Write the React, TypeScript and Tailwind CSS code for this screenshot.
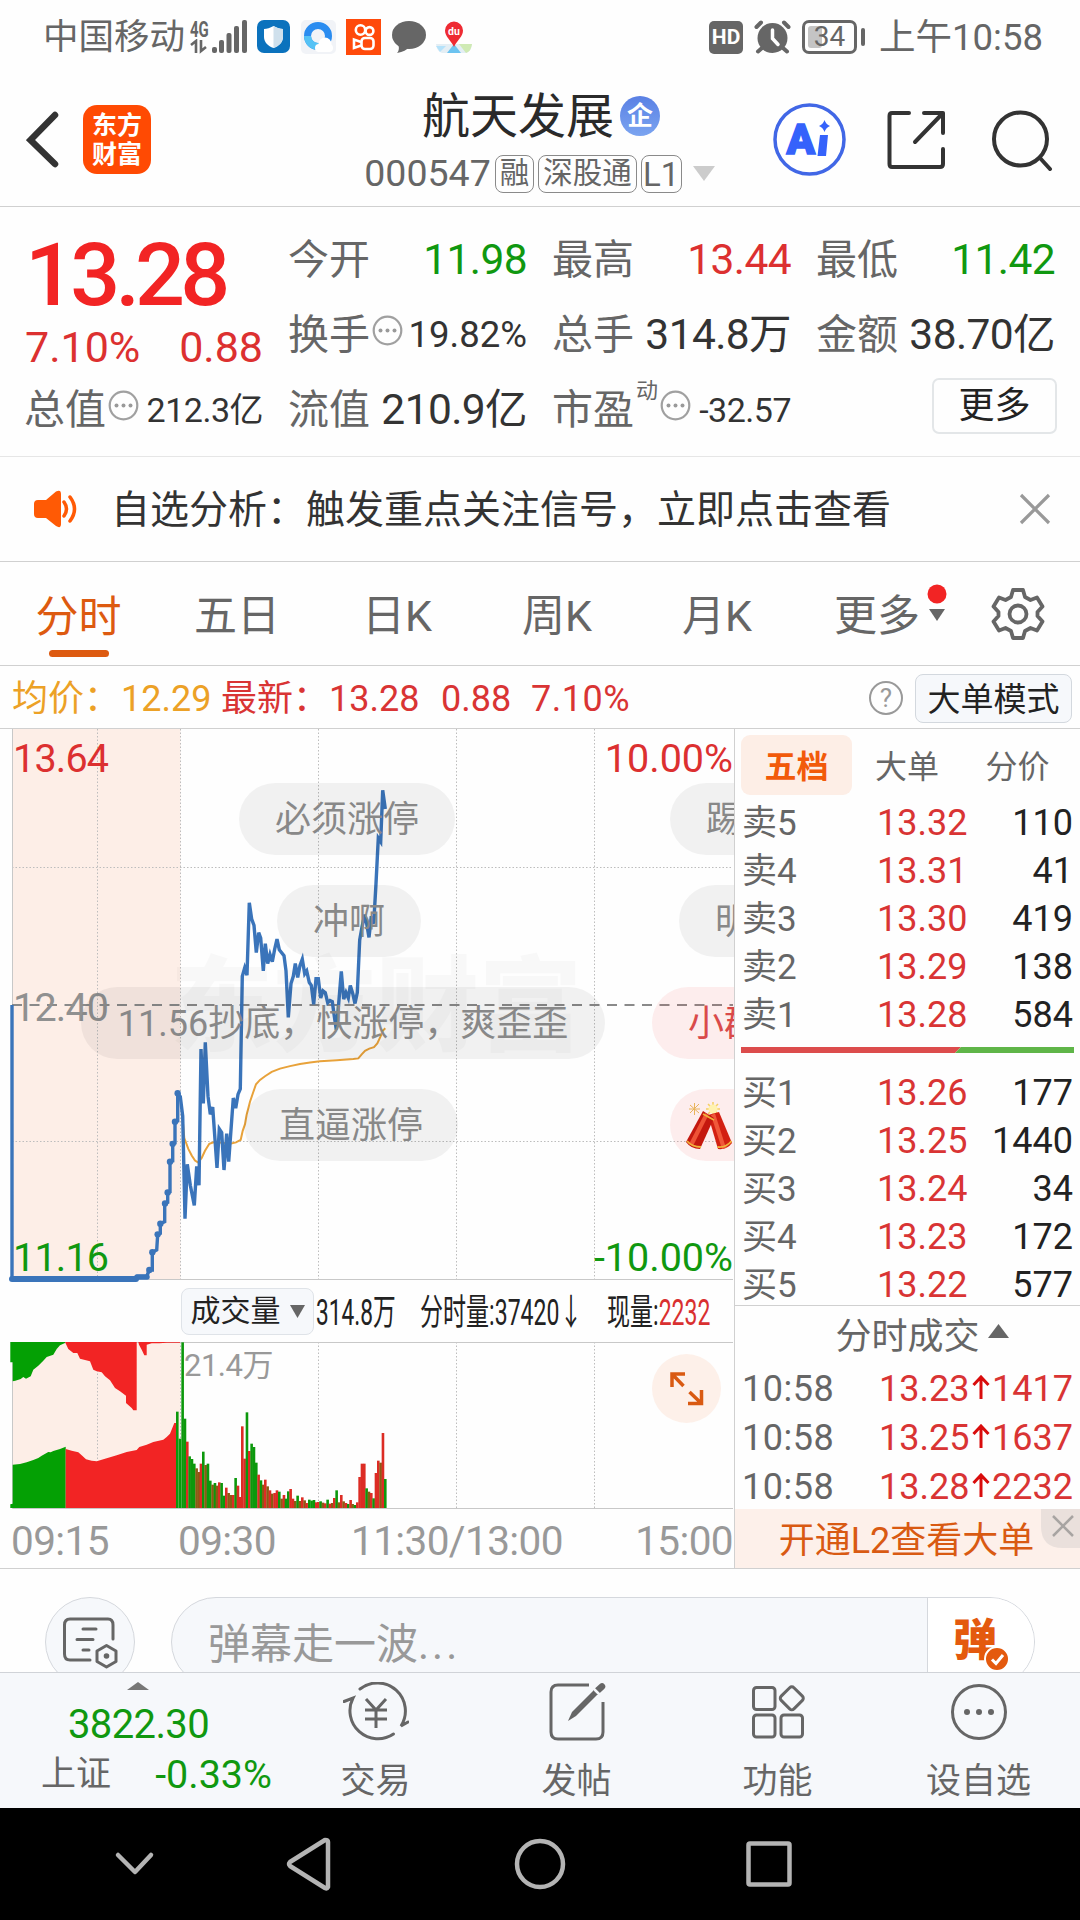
import React from "react";

type Point = [number, number];

const toPricePoint = ([x, y]: Point) => `${(x / 3).toFixed(1)},${(y / 2.751 - 9).toFixed(1)}`;
const toVolumePoint = ([x, y]: Point) => `${(x / 3).toFixed(1)},${((y - 187) / 3).toFixed(1)}`;

const auctionLine: Point[] = [
  [36, 784], [36, 1537], [410, 1537], [412, 1531], [440, 1531], [448, 1513], [457, 1513], [457, 1464],
  [470, 1458], [473, 1415], [481, 1412], [481, 1386], [494, 1380], [494, 1330], [503, 1327], [503, 1300],
  [510, 1298], [510, 1215], [518, 1213], [518, 1166], [525, 1164], [525, 1105], [533, 1103], [533, 1027],
];

const auctionDots: Point[] = [
  [448, 1513], [457, 1464], [473, 1415], [481, 1386], [495, 1330], [503, 1300], [510, 1215], [518, 1166],
  [525, 1105], [533, 1027],
];

const priceLine: Point[] = [
  [533, 1027], [541, 1036], [548, 1090], [555, 1372], [562, 1222], [571, 1280], [583, 1335], [590, 1228],
  [597, 1280], [603, 905], [610, 1055], [616, 887], [624, 1035], [631, 1085], [638, 1065], [651, 1232],
  [658, 1125], [665, 1135], [672, 1238], [680, 1138], [686, 1215], [700, 1040], [707, 1068], [714, 1030],
  [721, 1015], [727, 705], [734, 682], [741, 702], [748, 503], [755, 548], [762, 565], [769, 640],
  [776, 585], [782, 600], [790, 690], [796, 615], [803, 670], [810, 645], [817, 665], [824, 630],
  [831, 603], [838, 632], [852, 648], [858, 690], [865, 818], [873, 725], [880, 705], [886, 670],
  [893, 708], [900, 675], [907, 658], [914, 698], [920, 690], [928, 722], [934, 730], [941, 782],
  [948, 712], [955, 712], [962, 765], [969, 745], [976, 750], [983, 778], [990, 772], [997, 775],
  [1003, 815], [1009, 852], [1016, 780], [1024, 692], [1031, 768], [1038, 750], [1045, 765], [1051, 730],
  [1058, 752], [1065, 780], [1072, 750], [1079, 605], [1086, 570], [1094, 535], [1100, 560], [1107, 598],
  [1114, 540], [1121, 560], [1128, 450], [1135, 325], [1142, 335], [1148, 193], [1156, 245],
];

const averageLine: Point[] = [
  [548, 1100], [553, 1150], [565, 1180], [575, 1198], [585, 1212], [594, 1217], [605, 1205], [615, 1185],
  [628, 1166], [645, 1160], [665, 1163], [690, 1166], [708, 1162], [722, 1155], [728, 1130], [735, 1112],
  [740, 1085], [750, 1050], [758, 1028], [768, 1002], [780, 990], [795, 980], [815, 968], [840, 959],
  [870, 952], [900, 946], [930, 942], [960, 939], [1010, 936], [1060, 933], [1075, 931], [1085, 920],
  [1095, 910], [1108, 904], [1122, 900], [1132, 890], [1142, 870], [1148, 855], [1156, 848],
];

const volumeAreas: { color: string; points: Point[] }[] = [
  {
    color: "#04a004",
    points: [
      [31, 187], [31, 248], [38, 248], [38, 305], [46, 303], [62, 298], [70, 292], [78, 297], [92, 290],
      [100, 270], [115, 258], [130, 243], [140, 232], [160, 225], [170, 208], [180, 197], [195, 190], [195, 187],
    ],
  },
  {
    color: "#f22424",
    points: [
      [195, 187], [205, 208], [220, 220], [232, 220], [240, 237], [270, 245], [280, 270], [290, 275], [305, 278],
      [315, 290], [330, 302], [345, 325], [360, 335], [378, 348], [378, 370], [395, 385], [400, 392], [410, 392],
      [410, 187],
    ],
  },
  {
    color: "#f22424",
    points: [
      [415, 187], [417, 195], [425, 210], [433, 227], [440, 227], [440, 195], [455, 191], [478, 191], [500, 189],
      [540, 189], [540, 187],
    ],
  },
  {
    color: "#04a004",
    points: [
      [31, 685], [31, 674], [38, 672], [38, 555], [60, 553], [80, 548], [100, 541], [115, 535], [125, 528],
      [145, 517], [152, 518], [160, 514], [180, 508], [197, 501], [197, 685],
    ],
  },
  {
    color: "#f22424",
    points: [
      [197, 685], [197, 508], [215, 513], [235, 518], [245, 527], [258, 539], [275, 543], [290, 545], [320, 536],
      [350, 527], [380, 517], [410, 511], [418, 502], [440, 495], [460, 487], [490, 480], [500, 472], [510, 462],
      [517, 445], [523, 430], [528, 430], [528, 685],
    ],
  },
];

const barColors: Record<string, string> = { g: "#0c980c", r: "#dc2c24", m: "#8c5a14" };

const volumeBars: [number, string, number][] = [
  [532, "g", 396], [540, "g", 477], [548, "g", 188], [555, "g", 417], [562, "r", 486], [569, "g", 530],
  [576, "g", 538], [583, "g", 552], [590, "m", 566], [597, "m", 577], [603, "r", 552], [610, "g", 516],
  [617, "m", 556], [624, "g", 552], [631, "g", 603], [638, "m", 615], [645, "g", 610], [651, "m", 618],
  [658, "r", 608], [665, "g", 610], [672, "g", 648], [679, "r", 624], [686, "m", 640], [693, "m", 646],
  [700, "r", 646], [707, "g", 595], [714, "r", 618], [720, "r", 652], [727, "r", 440], [734, "r", 537],
  [741, "g", 398], [748, "r", 514], [755, "g", 492], [762, "g", 502], [769, "g", 549], [776, "r", 585],
  [783, "g", 602], [790, "m", 615], [796, "r", 600], [803, "m", 620], [810, "r", 632], [817, "m", 642],
  [824, "r", 640], [831, "r", 632], [838, "g", 636], [845, "m", 657], [852, "r", 646], [858, "g", 657],
  [865, "g", 635], [872, "r", 628], [879, "r", 657], [886, "m", 664], [893, "g", 648], [900, "m", 664],
  [907, "r", 653], [914, "m", 662], [920, "r", 670], [928, "g", 660], [935, "g", 663], [942, "g", 661],
  [949, "r", 668], [955, "r", 667], [962, "g", 665], [969, "m", 669], [976, "r", 671], [983, "g", 660],
  [990, "r", 672], [997, "m", 670], [1003, "r", 655], [1010, "g", 632], [1017, "m", 668], [1024, "r", 646],
  [1031, "m", 665], [1038, "r", 670], [1045, "g", 673], [1052, "r", 661], [1058, "m", 673], [1065, "g", 676],
  [1072, "r", 668], [1079, "r", 592], [1086, "r", 552], [1093, "r", 552], [1100, "g", 626], [1107, "m", 636],
  [1114, "r", 640], [1121, "g", 656], [1128, "r", 580], [1135, "r", 543], [1142, "m", 549], [1149, "r", 460],
  [1156, "g", 598],
];

const sells = [
  ["卖5", "13.32", "110"],
  ["卖4", "13.31", "41"],
  ["卖3", "13.30", "419"],
  ["卖2", "13.29", "138"],
  ["卖1", "13.28", "584"],
];

const buys = [
  ["买1", "13.26", "177"],
  ["买2", "13.25", "1440"],
  ["买3", "13.24", "34"],
  ["买4", "13.23", "172"],
  ["买5", "13.22", "577"],
];

const trades = [
  ["10:58", "13.23", "1417"],
  ["10:58", "13.25", "1637"],
  ["10:58", "13.28", "2232"],
];

const StatusBar: React.FC = () => (
  <div className="flex h-[74px] items-center justify-between pl-[43px] pr-[37px] text-[#666]">
    <div className="flex items-center">
      <span className="w-[147px] whitespace-nowrap pt-[2px] text-[35.5px] leading-none">中国移动</span>
      <div className="flex w-[60px] items-end">
        <div className="flex w-[22px] flex-col items-start">
          <span className="origin-left scale-x-[0.68] text-[22px] font-bold leading-[18px]">4G</span>
          <svg width="18" height="15" viewBox="0 0 18 15" fill="none" stroke="#666" strokeWidth="2.6">
            <path d="M1 6 L6 2 V14 M11 1 V12 L16 8" />
          </svg>
        </div>
        <svg width="36" height="34" viewBox="0 0 36 34" fill="#666">
          <rect x="0" y="27" width="5" height="6" rx="2" />
          <rect x="7" y="20" width="5" height="13" rx="2" />
          <rect x="14.5" y="13" width="5" height="20" rx="2" />
          <rect x="22" y="6" width="5" height="27" rx="2" />
          <rect x="30" y="0" width="5" height="33" rx="2" />
        </svg>
      </div>
      <div className="ml-[7px] flex items-center gap-[10px]">
        <svg width="34" height="34" viewBox="0 0 34 34">
          <rect width="33" height="33" rx="7" fill="#0b72bd" />
          <path d="M16.5 6 C20 8 23 9 26 9 V17 C26 22 22 26 16.5 28 C11 26 7 22 7 17 V9 C10 9 13 8 16.5 6Z" fill="#fff" />
          <path d="M16.5 6 C20 8 23 9 26 9 V17 C26 22 22 26 16.5 28Z" fill="#cfe0ec" />
        </svg>
        <svg width="35" height="34" viewBox="0 0 35 34">
          <rect width="35" height="34" rx="5" fill="#f1f3f7" />
          <circle cx="17" cy="16" r="10.5" fill="none" stroke="#2a8cf0" strokeWidth="7" />
          <path d="M6.5 16 A10.5 10.5 0 0 0 20 26" fill="none" stroke="#55c2f5" strokeWidth="7" />
          <circle cx="24" cy="24" r="6.5" fill="#fff" />
          <rect x="14" y="24" width="18" height="8" rx="4" fill="#fff" />
        </svg>
        <svg width="36" height="36" viewBox="0 0 36 36" fill="none" stroke="#fff" strokeWidth="2.6">
          <rect width="35" height="36" fill="#ff4a0b" stroke="none" />
          <circle cx="14.5" cy="11" r="4.7" />
          <circle cx="23.5" cy="12" r="3.9" />
          <rect x="15.5" y="19" width="12" height="11" rx="3.5" />
          <path d="M15 23 L8 20.5 V29 L15 26.5" />
        </svg>
        <svg width="34" height="34" viewBox="0 0 34 34" fill="#666">
          <ellipse cx="17" cy="15" rx="17" ry="14" />
          <path d="M5 22 C8 27 7 31 5 33 C11 32 15 30 17 27Z" />
        </svg>
        <svg width="36" height="34" viewBox="0 0 36 34">
          <path d="M0 24 H36 C35 30 33 32 30 33 H6 C3 32 1 30 0 24Z" fill="#e4eef4" />
          <path d="M23 24 H36 C35 30 33 32 30 33Z" fill="#cfeab4" />
          <path d="M0 26 H10 L4 32Z" fill="#b5e2fa" />
          <path d="M18 24 L25 33 H11Z" fill="#6cc3f0" />
          <path d="M18 27 C15 20 9 17 9 10.5 A9 9 0 0 1 27 10.5 C27 17 21 20 18 27Z" fill="#ee2b33" />
          <text x="18" y="14.5" fontSize="10.5" fontWeight="700" textAnchor="middle" fill="#fff">du</text>
        </svg>
      </div>
    </div>
    <div className="flex items-center">
      <div className="flex h-[33px] w-[34px] items-center justify-center rounded-[5px] bg-[#666] text-[21px] font-bold leading-none text-white">
        HD
      </div>
      <svg className="ml-[11px]" width="37" height="34" viewBox="0 0 37 34" fill="none" strokeLinecap="round">
        <circle cx="18.5" cy="18" r="15" fill="#666" />
        <path d="M2.5 7 L7 2.5 M34.5 7 L30 2.5 M4 31.5 L8 28 M33 31.5 L29 28" stroke="#666" strokeWidth="4" />
        <path d="M18.5 10 V18.5 L24 24.5" stroke="#fff" strokeWidth="3.5" />
      </svg>
      <div className="ml-[11px] flex items-center gap-1">
        <div className="relative flex h-[34px] w-[55px] items-center justify-center rounded-[7px] border-[3px] border-[#666]">
          <div className="absolute left-[3px] top-[3px] h-[22px] w-[14px] rounded-[3px] bg-[#c4c4c4]" />
          <span className="relative text-[28px] leading-none">34</span>
        </div>
        <div className="h-[18px] w-[4px] rounded-full bg-[#666]" />
      </div>
      <span className="ml-[14px] whitespace-nowrap pt-[2px] text-[36.5px] leading-none">上午10:58</span>
    </div>
  </div>
);

const Tag: React.FC<{ children: React.ReactNode }> = ({ children }) => (
  <span className="flex h-[38px] items-center rounded-[8px] border border-[#8a8a8a] px-1 text-[29.5px] leading-none">
    {children}
  </span>
);

const Header: React.FC = () => (
  <header className="flex h-[133px] items-start border-b border-[#d0d0d0] pl-[26px] pr-[27px]">
    <div className="flex w-[320px] items-center pt-[31px]">
      <svg className="mb-1" width="34" height="60" viewBox="0 0 34 60" fill="none" stroke="#333" strokeWidth="6.5" strokeLinecap="round">
        <path d="M29 7 L4.5 32 L29 56" />
      </svg>
      <div className="ml-[23px] flex h-[69px] w-[68px] flex-col items-center justify-center rounded-[14px] bg-[#ff4a03] text-[25px] font-bold leading-[29px] text-white">
        <span>东方</span>
        <span>财富</span>
      </div>
    </div>
    <div className="flex flex-1 flex-col items-center pl-[3px] pt-[18px]">
      <div className="flex h-[50px] items-center gap-[6px]">
        <h1 className="whitespace-nowrap text-[48px] leading-none text-[#2a2a2a]">航天发展</h1>
        <span className="mb-[2px] flex h-[40px] w-[40px] items-center justify-center rounded-full bg-gradient-to-b from-[#5a80e4] to-[#7ba4f0] text-[26px] font-bold leading-none text-white">
          企
        </span>
      </div>
      <div className="mt-[13px] flex h-[38px] items-center gap-[4px] whitespace-nowrap pr-[3px] text-[#666]">
        <span className="text-[37.5px] leading-none">000547</span>
        <Tag>融</Tag>
        <Tag>深股通</Tag>
        <span className="flex h-[38px] w-[41px] items-center justify-center rounded-[8px] border border-[#8a8a8a] text-[33px] leading-none">L1</span>
        <svg className="ml-[7px]" width="22" height="16" viewBox="0 0 22 16" fill="#ccc">
          <path d="M0 0 H22 L11 15Z" />
        </svg>
      </div>
    </div>
    <div className="flex w-[320px] items-center justify-end pt-[29px]">
      <svg width="73" height="73" viewBox="0 0 73 73">
        <circle cx="36.5" cy="36.5" r="34.5" fill="#fff" stroke="#4167e6" strokeWidth="3.5" />
        <text x="13.5" y="51" fontSize="42" fontWeight="900" fill="#3562fb" stroke="#3562fb" strokeWidth="1.5">A</text>
        <path d="M47 32 H55 L53 53 H44.5Z" fill="#3562fb" />
        <path d="M51.5 17 Q53 21.5 57 23 Q53 24.5 51.5 29 Q50 24.5 46 23 Q50 21.5 51.5 17Z" fill="#3562fb" />
      </svg>
      <svg className="ml-[41px]" width="60" height="60" viewBox="0 0 60 60" fill="none" stroke="#333" strokeWidth="4" strokeLinecap="round" strokeLinejoin="round">
        <path d="M22 3 H5 Q2.5 3 2.5 6 V54 Q2.5 57 5 57 H53 Q56 57 56 54 V39 M37 3 H56 V23 M56 3 L28 32" />
      </svg>
      <svg className="ml-[44px]" width="62" height="62" viewBox="0 0 62 62" fill="none" stroke="#333" strokeWidth="4" strokeLinecap="round">
        <circle cx="29.5" cy="30" r="26.5" />
        <path d="M49 49 L59 60" />
      </svg>
    </div>
  </header>
);

const MoreDots: React.FC = () => (
  <svg className="mb-[10px] shrink-0" width="31" height="31" viewBox="0 0 31 31" fill="#999">
    <circle cx="15.5" cy="15.5" r="13.8" fill="none" stroke="#a0a0a0" strokeWidth="2.2" />
    <circle cx="8.500" cy="15.5" r="2" />
    <circle cx="15.5" cy="15.5" r="2" />
    <circle cx="22.5" cy="15.5" r="2" />
  </svg>
);

interface StatProps {
  label: string;
  value: string;
  tone?: string;
  small?: boolean;
  dots?: boolean;
  sup?: string;
}

const Stat: React.FC<StatProps> = ({ label, value, tone = "text-[#333]", small, dots, sup }) => (
  <div className="flex h-[75px] items-center justify-between whitespace-nowrap pt-[3px] leading-none">
    <div className="-ml-px flex items-center">
      <span className="text-[41px] text-[#666]">{label}</span>
      {sup && <span className="mb-[38px] ml-[2px] text-[22px] text-[#666]">{sup}</span>}
      {dots && <span className="ml-[2px] flex"><MoreDots /></span>}
    </div>
    <span className={`${small ? "text-[34px] tracking-[-0.5px]" : "text-[42.5px] tracking-[-0.6px]"} ${tone}`}>{value}</span>
  </div>
);

const Quote: React.FC = () => (
  <section className="grid h-[250px] grid-cols-4 gap-x-[26px] border-b border-[#e6e6e6] px-[25px] pt-[14px]">
    <div>
      <div className="flex h-[75px] items-center">
        <span className="mt-[33px] text-[88px] font-medium leading-none tracking-[-4.8px] text-[#f22424]">13.28</span>
      </div>
      <div className="flex h-[75px] items-center justify-between pt-[28px] text-[43px] leading-none text-[#dc3030]">
        <span>7.10%</span>
        <span>0.88</span>
      </div>
      <Stat label="总值" value="212.3亿" small dots />
    </div>
    <div>
      <Stat label="今开" value="11.98" tone="text-[#109810]" />
      <div className="flex h-[75px] items-center justify-between whitespace-nowrap pt-[3px] leading-none">
        <div className="-ml-px flex items-center">
          <span className="text-[41px] text-[#666]">换手</span>
          <span className="ml-[2px] flex"><MoreDots /></span>
        </div>
        <span className="text-[36.5px] text-[#333]">19.82%</span>
      </div>
      <Stat label="流值" value="210.9亿" />
    </div>
    <div>
      <Stat label="最高" value="13.44" tone="text-[#dc3030]" />
      <Stat label="总手" value="314.8万" />
      <Stat label="市盈" value="-32.57" small dots sup="动" />
    </div>
    <div>
      <Stat label="最低" value="11.42" tone="text-[#109810]" />
      <Stat label="金额" value="38.70亿" />
      <div className="-mr-[2px] flex h-[75px] items-center justify-end pb-[5px]">
        <button className="h-[56px] w-[125px] rounded-[7px] border-2 border-[#e3e6e8] text-[36px] leading-none text-[#222]">更多</button>
      </div>
    </div>
  </section>
);

const Notice: React.FC = () => (
  <div className="flex h-[105px] items-center border-b border-[#d0d0d0] pl-[33px] pr-[29px]">
    <svg width="45" height="38" viewBox="0 0 45 38" fill="#ff5a05">
      <path d="M5 10 H13 L23 1.5 Q28 -1 28 4 V34 Q28 39 23 36 L13 28 H5 Q1 28 1 24 V14 Q1 10 5 10Z" />
      <path d="M31 12 Q36 19 31 26 M37 7 Q46 19 37 31" fill="none" stroke="#ff5a05" strokeWidth="3.5" strokeLinecap="round" />
    </svg>
    <span className="ml-[33px] whitespace-nowrap pt-[3px] text-[39px] leading-none text-[#333]">
      自选分析：触发重点关注信号，立即点击查看
    </span>
    <svg className="ml-auto" width="32" height="32" viewBox="0 0 32 32" stroke="#999" strokeWidth="3.2">
      <path d="M2 2 L30 30 M30 2 L2 30" />
    </svg>
  </div>
);

const Tabs: React.FC = () => (
  <nav className="flex h-[104px] items-center border-b border-[#d0d0d0] text-[43px] leading-none text-[#666]">
    <div className="flex h-full w-[157px] flex-col items-center pt-[34px] text-[#dd5a10]">
      <span>分时</span>
      <span className="mt-[11px] h-[7px] w-[60px] rounded-full bg-[#dd5a10]" />
    </div>
    {["五日", "日K", "周K", "月K"].map((tab) => (
      <span key={tab} className="w-[160px] pt-[5px] text-center">{tab}</span>
    ))}
    <div className="relative w-[160px] pt-[5px] text-center">
      更多
      <svg className="absolute left-[130px] top-[-6px]" width="20" height="40" viewBox="0 0 20 40">
        <circle cx="10" cy="10" r="9.5" fill="#f22424" />
        <path d="M2 25 H18 L10 37Z" fill="#666" />
      </svg>
    </div>
    <svg className="ml-[34px]" width="54" height="54" viewBox="0 0 54 54" fill="none" stroke="#666" strokeWidth="3.8" strokeLinejoin="round">
      <path d="M22 3 H32 L34 10 L39.5 13 L46 10.5 L51.5 19.5 L46.5 25 V29 L51.5 34.5 L46 43.5 L39.5 41 L34 44 L32 51 H22 L20 44 L14.5 41 L8 43.5 L2.5 34.5 L7.5 29 V25 L2.5 19.5 L8 10.5 L14.5 13 L20 10Z" />
      <circle cx="27" cy="27" r="8.5" />
    </svg>
  </nav>
);

const InfoRow: React.FC = () => (
  <div className="flex h-[63px] items-center border-b border-[#d0d0d0] pl-3 pr-[8px] pt-[2px] text-[36px] leading-none text-[#d93434]">
    <span className="w-[109px] whitespace-nowrap pt-[2px] text-[#eca126]">均价：</span>
    <span className="w-[100px] pt-[2px] text-[#eca126]">12.29</span>
    <span className="w-[108px] whitespace-nowrap pt-[2px]">最新：</span>
    <span className="w-[112px] pt-[2px]">13.28</span>
    <span className="w-[90px] pt-[2px]">0.88</span>
    <span className="pt-[2px] tracking-[0.5px]">7.10%</span>
    <div className="ml-auto flex items-center gap-3">
      <span className="flex h-[34px] w-[34px] items-center justify-center rounded-full border-[2.5px] border-[#999] text-[26px] leading-none text-[#999]">?</span>
      <button className="h-[49px] w-[157px] whitespace-nowrap rounded-[8px] border border-[#d3d8de] bg-[#f6f8fb] pt-[2px] text-[33px] leading-none text-[#222]">
        大单模式
      </button>
    </div>
  </div>
);

const Bubble: React.FC<{ className: string; children: React.ReactNode }> = ({ className, children }) => (
  <div className={`absolute flex h-[72px] items-center whitespace-nowrap rounded-full pt-[2px] text-[36px] leading-none ${className}`}>
    {children}
  </div>
);

const PriceChart: React.FC = () => (
  <div className="relative h-[551px] overflow-x-clip">
    <svg className="absolute inset-0" width="734" height="551" viewBox="0 0 734 551" fill="none">
      <rect x="12" y="0" width="168.5" height="550" fill="#fdeee7" />
      <g stroke="#bdbdbd" strokeWidth="1" strokeDasharray="1.5 2">
        <path d="M97.5 0 V550 M180.5 0 V550 M318.5 0 V550 M456.5 0 V550 M594.5 0 V550" />
        <path d="M12 138.5 H733 M12 412.5 H733" />
      </g>
      <path d="M12.5 0 V550.5 H733" stroke="#c8c8c8" strokeWidth="1" />
    </svg>
    <span className="absolute left-[170px] top-[227px] whitespace-nowrap text-[103px] font-black leading-none text-black/[0.025]">
      东方财富
    </span>
    <svg className="absolute inset-0 overflow-visible" width="734" height="551" viewBox="0 0 734 551" fill="none">
      <path d="M12 276 H733" stroke="#8a8a8a" strokeWidth="2" strokeDasharray="10 7.5" />
      <polyline points={averageLine.map(toPricePoint).join(" ")} stroke="#e8a23a" strokeWidth="2" />
      <polyline points={auctionLine.map(toPricePoint).join(" ")} stroke="#3a74ba" strokeWidth="3.4" />
      <path d="M12 550 H136" stroke="#3a74ba" strokeWidth="6" strokeLinecap="round" />
      <path d="M137 548 H147" stroke="#3a74ba" strokeWidth="5.5" strokeLinecap="round" />
      {auctionDots.map(([x, y]) => (
        <circle key={x} cx={x / 3} cy={y / 2.751 - 9} r="3.2" fill="#3a74ba" />
      ))}
      <polyline points={priceLine.map(toPricePoint).join(" ")} stroke="#3a74ba" strokeWidth="3.4" />
    </svg>
    <div className="absolute inset-0 flex flex-col text-[39.5px] leading-none">
      <div className="flex justify-between pl-[13px] pr-px pt-[10px] text-[#dc3030]">
        <span className="tracking-[-0.8px]">13.64</span>
        <span>10.00%</span>
      </div>
      <span className="mt-[209px] pl-[13px] tracking-[-0.8px] text-[#909090]">12.40</span>
      <div className="mt-auto flex justify-between pb-[3px] pl-[13px] pr-px text-[#109810]">
        <span className="tracking-[-0.8px]">11.16</span>
        <span>-10.00%</span>
      </div>
    </div>
    <Bubble className="left-[239px] top-[54px] w-[216px] justify-center bg-black/5 text-[#888]">必须涨停</Bubble>
    <Bubble className="left-[277px] top-[156px] w-[144px] justify-center bg-black/5 text-[#888]">冲啊</Bubble>
    <Bubble className="left-[81px] top-[258px] w-[524px] justify-center bg-black/5 text-[#888]">11.56抄底，快涨停，爽歪歪</Bubble>
    <Bubble className="left-[244px] top-[360px] w-[214px] justify-center bg-black/5 text-[#888]">直逼涨停</Bubble>
    <Bubble className="left-[670px] top-[54px] w-[180px] bg-black/5 pl-9 text-[#888]">踢</Bubble>
    <Bubble className="left-[679px] top-[156px] w-[180px] bg-black/5 pl-9 text-[#888]">明</Bubble>
    <Bubble className="left-[652px] top-[258px] w-[180px] bg-[#f22424]/[0.08] pl-9 text-[#d94a4a]">小群</Bubble>
    <Bubble className="left-[670px] top-[360px] w-[180px] bg-[#f22424]/[0.08] pl-4">
      <svg width="46" height="48" viewBox="0 0 46 48">
        <g stroke="#e9b45a" strokeWidth="1">
          <path d="M4 3 L13 11 M13 2 L4 11 M8.5 1 V13 M3 7 H14" />
        </g>
        <g stroke="#f6cf63" strokeWidth="1.5">
          <path d="M27 0 V14 M20 7 H34 M22 2 L32 12 M32 2 L22 12" />
        </g>
        <circle cx="27" cy="7" r="4.5" fill="#fff2b0" />
        <path d="M22 13 L33 10 L46 41 Q41 48 32 47Z" fill="#d32012" />
        <path d="M25 13 L29 11.500 L40 46 L36 47Z" fill="#f0583a" />
        <path d="M17 9 L28 16 L14 47 Q5 47 0 40Z" fill="#c4180e" />
        <path d="M19 11 L22.5 13 L7 44 L3 42Z" fill="#ee5336" />
        <path d="M1 39 Q6 45 15 45 M31.5 45 Q40 46 45.5 39 M17 12 L28 18" fill="none" stroke="#f0b33c" strokeWidth="1.8" />
      </svg>
    </Bubble>
  </div>
);

const VolumeChart: React.FC = () => (
  <>
    <div className="flex h-[62px] items-center pl-[181px] text-[#222]">
      <div className="flex h-[47px] w-[133px] shrink-0 items-center justify-center gap-[9px] rounded-[8px] border border-[#dfe3e8] bg-[#f6f8fb]">
        <span className="whitespace-nowrap text-[30px] leading-none">成交量</span>
        <svg width="15" height="13" viewBox="0 0 15 13" fill="#666">
          <path d="M0 0 H15 L7.5 13Z" />
        </svg>
      </div>
      <div className="ml-[2px] flex w-[398px] whitespace-nowrap pt-[3px] text-[36px] leading-none">
        <span className="w-[104px] origin-left scale-x-[0.63]">314.8万</span>
        <span className="w-[187px] origin-left scale-x-[0.64]">分时量:37420↓</span>
        <span className="origin-left scale-x-[0.64]">
          现量:<span className="text-[#d93030]">2232</span>
        </span>
      </div>
    </div>
    <div className="relative h-[167px]">
      <svg className="absolute inset-0" width="734" height="167" viewBox="0 0 734 167">
        <rect x="12" y="0" width="168.5" height="166" fill="#fdeee7" />
        <path d="M97.5 0 V166 M180.5 0 V166 M318.5 0 V166 M456.5 0 V166 M594.5 0 V166" stroke="#bdbdbd" strokeDasharray="1.5 2" />
        <path d="M733 0.5 H12.5 V166.5 H733" fill="none" stroke="#c8c8c8" strokeWidth="1" />
        {volumeAreas.map((area, i) => (
          <polygon key={i} fill={area.color} points={area.points.map(toVolumePoint).join(" ")} />
        ))}
        {volumeBars.map(([x, kind, top]) => (
          <rect key={x} x={(x - 4) / 3} y={(top - 187) / 3} width="2.6" height={(685 - top) / 3} fill={barColors[kind]} />
        ))}
      </svg>
      <span className="absolute left-[184px] top-[8px] text-[31px] leading-none tracking-[-0.5px] text-[#999]">21.4万</span>
      <svg className="absolute left-[652px] top-[12px]" width="69" height="69" viewBox="0 0 69 69" fill="none" stroke="#d95a12" strokeWidth="3.5">
        <circle cx="34.5" cy="34.5" r="34.5" fill="#fdf0e9" stroke="none" />
        <path d="M33 20 H20 V33 M20 20 L31.5 32 M36 49.5 H49.5 V36 M49.5 49.5 L37.5 38" />
      </svg>
    </div>
    <div className="flex h-[59px] items-center pl-[11px] pt-[5px] text-[40.5px] leading-none tracking-[-0.6px] text-[#999]">
      <span className="w-[167px]">09:15</span>
      <span className="w-[173px]">09:30</span>
      <span>11:30/13:00</span>
      <span className="ml-auto pr-px">15:00</span>
    </div>
  </>
);

const BookRow: React.FC<{ row: string[] }> = ({ row: [label, price, qty] }) => (
  <div className="flex h-12 items-center whitespace-nowrap pt-[2px] text-[36px] leading-none">
    <span className="w-[135px] text-[35px] text-[#666]">{label}</span>
    <span className="text-[#d93434]">{price}</span>
    <span className="ml-auto text-[#222]">{qty}</span>
  </div>
);

const OrderBook: React.FC = () => (
  <aside className="flex w-[346px] shrink-0 flex-col border-l border-[#d0d0d0]">
    <div className="flex h-[69px] items-center pl-[6px] pt-[3px] text-[32px] leading-none text-[#666]">
      <span className="flex h-[60px] w-[111px] items-center justify-center rounded-[9px] bg-[#fdeee6] pt-[3px] font-bold text-[#f25a0a]">五档</span>
      <span className="w-[110px] pt-[3px] text-center">大单</span>
      <span className="w-[111px] pt-[3px] text-center">分价</span>
    </div>
    <div className="h-[507px] pl-[7px] pr-[7px]">
      {sells.map((row) => (
        <BookRow key={row[0]} row={row} />
      ))}
      <svg className="-ml-px mb-[15px] mt-[9px] block" width="333" height="6" viewBox="0 0 333 6">
        <path d="M0 0 H220 L214 6 H0Z" fill="#dc4c4c" />
        <path d="M220 0 H333 V6 H214Z" fill="#5fb548" />
      </svg>
      {buys.map((row) => (
        <BookRow key={row[0]} row={row} />
      ))}
    </div>
    <div className="h-[204px] border-t border-[#d0d0d0]">
      <div className="flex h-[58px] items-center justify-center gap-[8px] pl-[29px] text-[36px] leading-none text-[#666]">
        <span className="whitespace-nowrap pt-[3px]">分时成交</span>
        <svg className="mb-[7px]" width="21" height="15" viewBox="0 0 21 15" fill="#666">
          <path d="M10.5 0 L21 14 H0Z" />
        </svg>
      </div>
      {trades.map(([time, price, qty]) => (
        <div key={price} className="flex h-[49px] items-center pl-[7px] pr-[7px] text-[36px] leading-none text-[#d93434]">
          <span className="w-[137px] tracking-[0.5px] text-[#666]">{time}</span>
          <span>{price}</span>
          <svg className="mx-auto mb-1" width="18" height="24" viewBox="0 0 18 24" fill="none" stroke="#d90c0c" strokeWidth="3">
            <path d="M9 24 V2 M1.5 10 L9 2 L16.5 10" />
          </svg>
          <span>{qty}</span>
        </div>
      ))}
    </div>
    <div className="relative flex h-[59px] items-center justify-center bg-[#fdf0ea] pt-[5px] text-[36px] leading-none text-[#d95a12]">
      <span className="whitespace-nowrap pr-[2px]">开通L2查看大单</span>
      <svg className="absolute right-0 top-0" width="39" height="39" viewBox="0 0 39 39">
        <path d="M0 0 H39 V39 H22 Q0 39 0 17Z" fill="#eae0dc" />
        <path d="M12 7 L32 27 M32 7 L12 27" stroke="#a8a4a2" strokeWidth="2.5" />
      </svg>
    </div>
  </aside>
);

const CommentBar: React.FC = () => (
  <div className="flex h-[103px] items-start overflow-hidden pl-[45px] pt-[28px]">
    <div className="flex h-[90px] w-[90px] shrink-0 items-center justify-center rounded-full border border-[#d5d8dd] bg-[#f6f8fb]">
      <svg className="mt-1" width="56" height="54" viewBox="0 0 56 54" fill="none" stroke="#666" strokeWidth="3" strokeLinecap="round">
        <path d="M28 43 H8 Q2.5 43 2.5 37 V8 Q2.5 2 8 2 H46 Q51 2 51 8 V22" />
        <path d="M21 12 H34 M15 22.5 H31 M21 33 H27" />
        <path d="M44.5 28.5 L54 34 V44.5 L44.5 50 L35 44.5 V34Z" strokeLinejoin="round" />
        <circle cx="44.5" cy="39" r="2.8" fill="#666" stroke="none" />
      </svg>
    </div>
    <div className="ml-[36px] flex h-[90px] w-[864px] items-center overflow-hidden rounded-full border border-[#d5d8dd] bg-[#f6f8fb]">
      <span className="flex-1 whitespace-nowrap pl-[36px] pt-[5px] text-[42px] leading-none text-[#999]">
        弹幕走一波<span className="tracking-[3px]">...</span>
      </span>
      <div className="relative h-full w-[107px] border-l border-[#d5d8dd] bg-white">
        <span className="absolute left-[25px] top-[21px] text-[44px] font-black leading-none text-[#e45a0e]">弹</span>
        <svg className="absolute left-[56px] top-[48px]" width="26" height="26" viewBox="0 0 26 26">
          <circle cx="13" cy="13" r="12" fill="#e45a0e" stroke="#fff" strokeWidth="2" />
          <path d="M8 13.5 L12 17.5 L19 9" fill="none" stroke="#fff" strokeWidth="3" />
        </svg>
      </div>
    </div>
  </div>
);

const NavItem: React.FC<{ label: string; children: React.ReactNode }> = ({ label, children }) => (
  <div className="flex w-[201px] flex-col items-center pt-[9px]">
    <svg width="66" height="60" viewBox="0 0 66 60" fill="none" stroke="#666" strokeWidth="3">
      {children}
    </svg>
    <span className="mt-[22px] whitespace-nowrap text-[35px] leading-none text-[#666]">{label}</span>
  </div>
);

const BottomNav: React.FC = () => (
  <nav className="flex h-[136px] border-t border-[#d0d3d8] bg-[#f6f8fb] leading-none">
    <div className="flex w-[275px] flex-col items-center pt-[9px] text-[#109810]">
      <svg width="22" height="8" viewBox="0 0 22 8" fill="#777">
        <path d="M11 0 L22 8 H0Z" />
      </svg>
      <span className="mt-[15px] pl-[2px] text-[40px] tracking-[-0.6px]">3822.30</span>
      <div className="mt-[10px] flex w-full items-center justify-between whitespace-nowrap pl-[41px] pr-[3px]">
        <span className="text-[35px] text-[#666]">上证</span>
        <span className="text-[39.5px]">-0.33%</span>
      </div>
    </div>
    <NavItem label="交易">
      <path d="M17 7 A28 28 0 0 1 58 44 L65 40 M50.5 52 A28 28 0 0 1 10 16 L1 19.5" strokeLinecap="round" />
      <path d="M23 17 L33 28 L43 17 M33 28 V46 M22 28 H44 M22 37 H44" />
    </NavItem>
    <NavItem label="发帖">
      <path d="M45 3 H14 Q7 3 7 10 V50 Q7 57 14 57 H52 Q59 57 59 50 V20" />
      <path d="M24 39 L28 30 L50 8 L54 12 L32 34Z" fill="#666" stroke="none" />
      <path d="M52.5 9.5 L58 4.5" strokeWidth="6.5" strokeLinecap="round" />
      <path d="M49 6 L57 14" stroke="#f6f8fb" strokeWidth="2.5" />
    </NavItem>
    <NavItem label="功能">
      <rect x="8.5" y="5.5" width="21.5" height="22" rx="3" />
      <rect x="8.5" y="33" width="21.5" height="22" rx="3" />
      <rect x="36" y="33" width="21.5" height="22" rx="3" />
      <rect x="37.8" y="7.3" width="18" height="18" rx="3" transform="rotate(45 46.8 16.3)" />
    </NavItem>
    <NavItem label="设自选">
      <circle cx="33" cy="30" r="26.5" />
      <g fill="#666" stroke="none">
        <circle cx="21" cy="30" r="3" />
        <circle cx="33" cy="30" r="3" />
        <circle cx="45" cy="30" r="3" />
      </g>
    </NavItem>
  </nav>
);

const SystemNav: React.FC = () => (
  <div className="flex h-[112px] items-center bg-black">
    <svg width="1080" height="112" viewBox="0 0 1080 112" fill="none" stroke="#b4b4b4" strokeWidth="4.5" strokeLinecap="round" strokeLinejoin="round">
      <path d="M118 47 L135 64 L151 47" />
      <path d="M328 34 V79 Q327 81 325 80 L290 58 Q288 56 290 54 L325 32 Q328 32 328 34Z" />
      <circle cx="540" cy="56" r="23" />
      <rect x="748.500" y="35.5" width="41" height="41" rx="1.5" />
    </svg>
  </div>
);

export default function App() {
  return (
    <div className="h-[1920px] w-[1080px] overflow-hidden bg-[#fefefe] font-['Roboto','Noto_Sans_CJK_SC',sans-serif]">
      <StatusBar />
      <Header />
      <Quote />
      <Notice />
      <Tabs />
      <InfoRow />
      <main className="flex h-[840px] border-b border-[#d0d0d0]">
        <div className="w-[734px] shrink-0">
          <PriceChart />
          <VolumeChart />
        </div>
        <OrderBook />
      </main>
      <CommentBar />
      <BottomNav />
      <SystemNav />
    </div>
  );
}
